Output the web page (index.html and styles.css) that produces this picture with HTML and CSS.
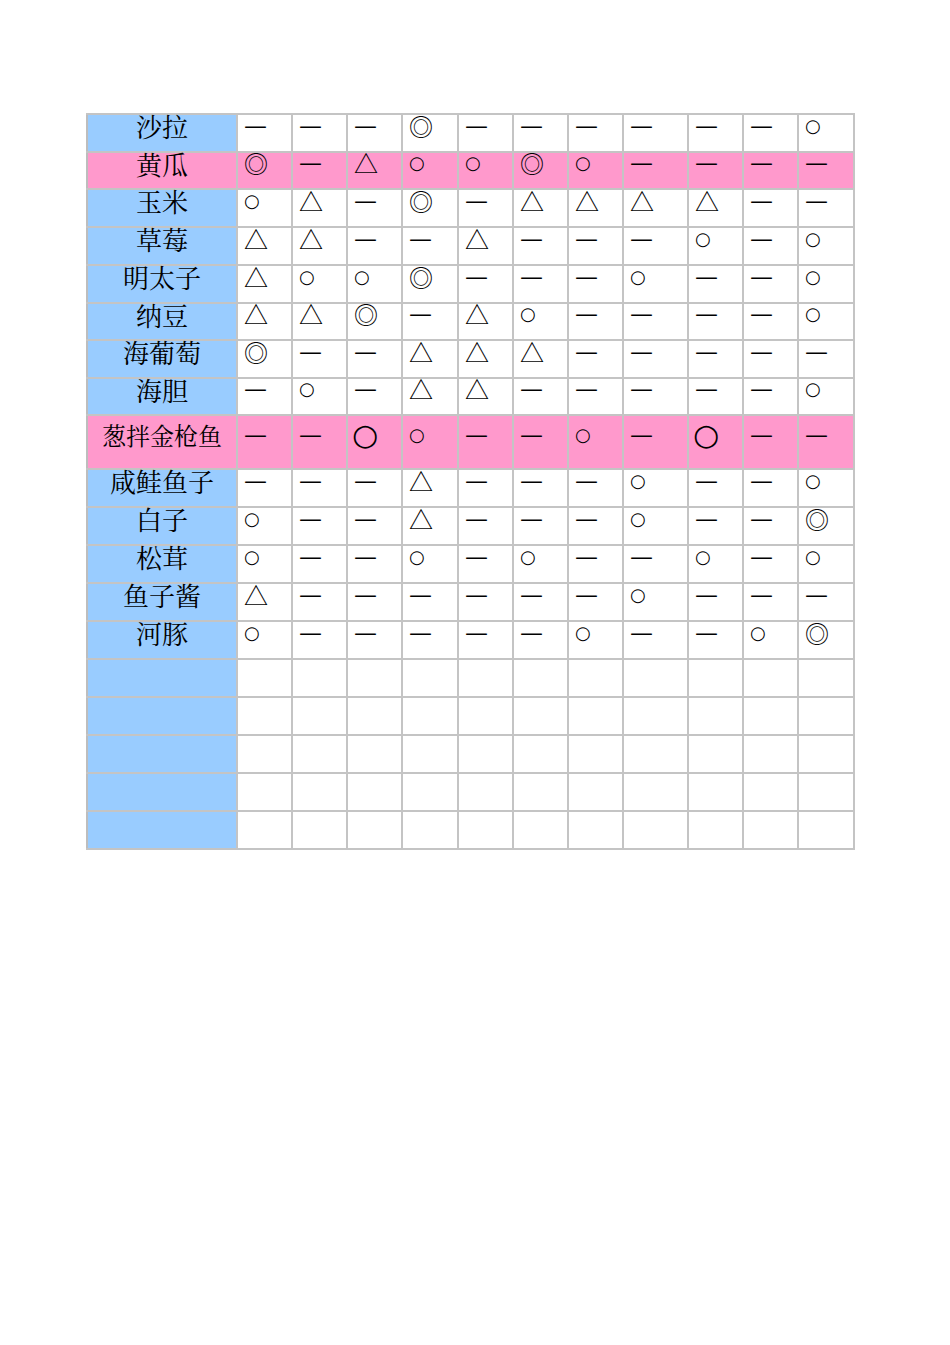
FILE: index.html
```html
<!DOCTYPE html>
<html lang="zh">
<head>
<meta charset="utf-8">
<title>食材表</title>
<link rel="stylesheet" href="styles.css">
</head>
<body>
<div class="page">
<table class="grid">
<colgroup>
<col class="c-label"><col class="c55"><col class="c55"><col class="c55"><col class="c56"><col class="c55"><col class="c55"><col class="c55"><col class="c65"><col class="c55"><col class="c55"><col class="c56">
</colgroup>
<tbody>
<tr><th>沙拉</th><td><i class="d">—</i></td><td><i class="d">—</i></td><td><i class="d">—</i></td><td><i class="w">◎</i></td><td><i class="d">—</i></td><td><i class="d">—</i></td><td><i class="d">—</i></td><td><i class="d">—</i></td><td><i class="d">—</i></td><td><i class="d">—</i></td><td><i class="o">○</i></td></tr>
<tr class="pink short"><th>黄瓜</th><td><i class="w">◎</i></td><td><i class="d">—</i></td><td><i class="t">△</i></td><td><i class="o">○</i></td><td><i class="o">○</i></td><td><i class="w">◎</i></td><td><i class="o">○</i></td><td><i class="d">—</i></td><td><i class="d">—</i></td><td><i class="d">—</i></td><td><i class="d">—</i></td></tr>
<tr><th>玉米</th><td><i class="o">○</i></td><td><i class="t">△</i></td><td><i class="d">—</i></td><td><i class="w">◎</i></td><td><i class="d">—</i></td><td><i class="t">△</i></td><td><i class="t">△</i></td><td><i class="t">△</i></td><td><i class="t">△</i></td><td><i class="d">—</i></td><td><i class="d">—</i></td></tr>
<tr><th>草莓</th><td><i class="t">△</i></td><td><i class="t">△</i></td><td><i class="d">—</i></td><td><i class="d">—</i></td><td><i class="t">△</i></td><td><i class="d">—</i></td><td><i class="d">—</i></td><td><i class="d">—</i></td><td><i class="o">○</i></td><td><i class="d">—</i></td><td><i class="o">○</i></td></tr>
<tr><th>明太子</th><td><i class="t">△</i></td><td><i class="o">○</i></td><td><i class="o">○</i></td><td><i class="w">◎</i></td><td><i class="d">—</i></td><td><i class="d">—</i></td><td><i class="d">—</i></td><td><i class="o">○</i></td><td><i class="d">—</i></td><td><i class="d">—</i></td><td><i class="o">○</i></td></tr>
<tr class="short"><th>纳豆</th><td><i class="t">△</i></td><td><i class="t">△</i></td><td><i class="w">◎</i></td><td><i class="d">—</i></td><td><i class="t">△</i></td><td><i class="o">○</i></td><td><i class="d">—</i></td><td><i class="d">—</i></td><td><i class="d">—</i></td><td><i class="d">—</i></td><td><i class="o">○</i></td></tr>
<tr><th>海葡萄</th><td><i class="w">◎</i></td><td><i class="d">—</i></td><td><i class="d">—</i></td><td><i class="t">△</i></td><td><i class="t">△</i></td><td><i class="t">△</i></td><td><i class="d">—</i></td><td><i class="d">—</i></td><td><i class="d">—</i></td><td><i class="d">—</i></td><td><i class="d">—</i></td></tr>
<tr class="short"><th>海胆</th><td><i class="d">—</i></td><td><i class="o">○</i></td><td><i class="d">—</i></td><td><i class="t">△</i></td><td><i class="t">△</i></td><td><i class="d">—</i></td><td><i class="d">—</i></td><td><i class="d">—</i></td><td><i class="d">—</i></td><td><i class="d">—</i></td><td><i class="o">○</i></td></tr>
<tr class="pink tall"><th class="small">葱拌金枪鱼</th><td><i class="d">—</i></td><td><i class="d">—</i></td><td><i class="big">○</i></td><td><i class="o">○</i></td><td><i class="d">—</i></td><td><i class="d">—</i></td><td><i class="o">○</i></td><td><i class="d">—</i></td><td><i class="big">○</i></td><td><i class="d">—</i></td><td><i class="d">—</i></td></tr>
<tr><th>咸鲑鱼子</th><td><i class="d">—</i></td><td><i class="d">—</i></td><td><i class="d">—</i></td><td><i class="t">△</i></td><td><i class="d">—</i></td><td><i class="d">—</i></td><td><i class="d">—</i></td><td><i class="o">○</i></td><td><i class="d">—</i></td><td><i class="d">—</i></td><td><i class="o">○</i></td></tr>
<tr><th>白子</th><td><i class="o">○</i></td><td><i class="d">—</i></td><td><i class="d">—</i></td><td><i class="t">△</i></td><td><i class="d">—</i></td><td><i class="d">—</i></td><td><i class="d">—</i></td><td><i class="o">○</i></td><td><i class="d">—</i></td><td><i class="d">—</i></td><td><i class="w">◎</i></td></tr>
<tr><th>松茸</th><td><i class="o">○</i></td><td><i class="d">—</i></td><td><i class="d">—</i></td><td><i class="o">○</i></td><td><i class="d">—</i></td><td><i class="o">○</i></td><td><i class="d">—</i></td><td><i class="d">—</i></td><td><i class="o">○</i></td><td><i class="d">—</i></td><td><i class="o">○</i></td></tr>
<tr><th>鱼子酱</th><td><i class="t">△</i></td><td><i class="d">—</i></td><td><i class="d">—</i></td><td><i class="d">—</i></td><td><i class="d">—</i></td><td><i class="d">—</i></td><td><i class="d">—</i></td><td><i class="o">○</i></td><td><i class="d">—</i></td><td><i class="d">—</i></td><td><i class="d">—</i></td></tr>
<tr><th>河豚</th><td><i class="o">○</i></td><td><i class="d">—</i></td><td><i class="d">—</i></td><td><i class="d">—</i></td><td><i class="d">—</i></td><td><i class="d">—</i></td><td><i class="o">○</i></td><td><i class="d">—</i></td><td><i class="d">—</i></td><td><i class="o">○</i></td><td><i class="w">◎</i></td></tr>
<tr class="empty"><th></th><td></td><td></td><td></td><td></td><td></td><td></td><td></td><td></td><td></td><td></td><td></td></tr>
<tr class="empty"><th></th><td></td><td></td><td></td><td></td><td></td><td></td><td></td><td></td><td></td><td></td><td></td></tr>
<tr class="empty"><th></th><td></td><td></td><td></td><td></td><td></td><td></td><td></td><td></td><td></td><td></td><td></td></tr>
<tr class="empty"><th></th><td></td><td></td><td></td><td></td><td></td><td></td><td></td><td></td><td></td><td></td><td></td></tr>
<tr class="empty"><th></th><td></td><td></td><td></td><td></td><td></td><td></td><td></td><td></td><td></td><td></td><td></td></tr>
</tbody>
</table>
</div>
</body>
</html>
```

FILE: styles.css
```css
html, body {
  margin: 0;
  padding: 0;
  background: #ffffff;
}

.page {
  padding: 113px 0 0 86px;
}

.grid {
  border-collapse: collapse;
  table-layout: fixed;
  width: 768px;
  font-family: "Noto Sans CJK SC", "DejaVu Sans", sans-serif;
  color: #000;
}

.c-label { width: 150px; }
.c55 { width: 55px; }
.c56 { width: 56px; }
.c65 { width: 65px; }

.grid tr {
  height: 38px;
}
.grid tr.short {
  height: 37px;
}
.grid tr.tall {
  height: 54px;
}

.grid th,
.grid td {
  border: 2px solid #c4c4c4;
  padding: 0 0 15px 6px;
  vertical-align: middle;
  text-align: left;
  white-space: nowrap;
  font-size: 0;
  line-height: 0;
}

.grid th {
  background: #99ccff;
  border-left-color: #bdbdbd;
  padding: 0 0 14px 0;
  text-align: center;
  font-family: "Noto Serif CJK SC", "Noto Sans CJK SC", serif;
  font-weight: 400;
  font-size: 26px;
  line-height: 20px;
}

.grid th.small {
  font-size: 24px;
}

.grid tr.pink th,
.grid tr.pink td {
  background: #ff99cc;
}

.grid i {
  font-style: normal;
  display: block;
  height: 20px;
  line-height: 20px;
  color: #000;
  font-family: "DejaVu Sans", sans-serif;
}

.d {
  font-size: 23px;
}
.o {
  font-size: 18px;
}
.grid i.w,
.grid i.t {
  font-family: "Noto Sans CJK SC", sans-serif;
}
.w {
  font-size: 24px;
}
.t {
  font-size: 24px;
}
.grid i.big {
  font-size: 30px;
  margin-left: -2px;
}
```
